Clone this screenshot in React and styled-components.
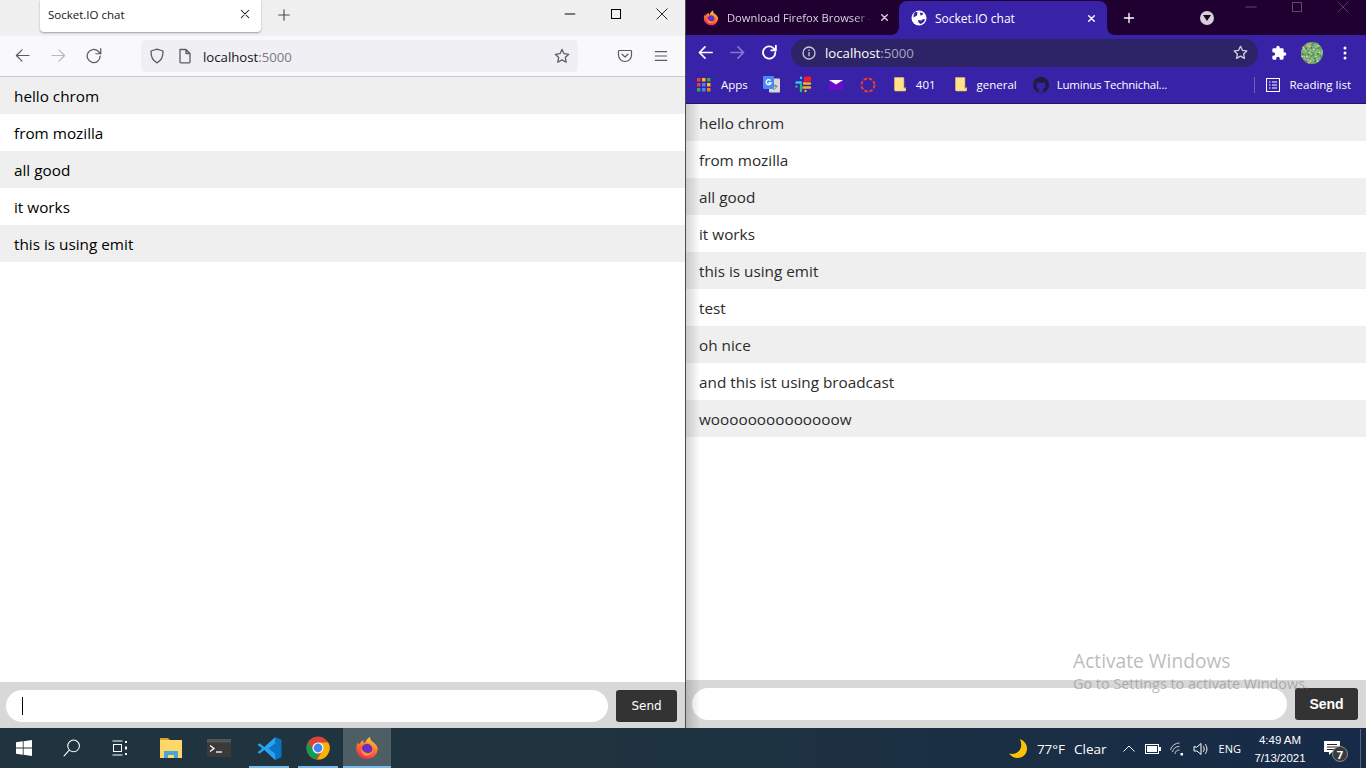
import styled, { createGlobalStyle } from "styled-components";

const GlobalStyle = createGlobalStyle`
  html, body {
    margin: 0;
    padding: 0;
    width: 1366px;
    height: 768px;
    overflow: hidden;
    background: #fff;
    font-family: "Open Sans", "Noto Sans", sans-serif;
  }
  * { box-sizing: border-box; }
  svg { display: block; flex: none; }
`;

const Screen = styled.div`
  position: relative;
  width: 1366px;
  height: 768px;
  display: flex;
  flex-direction: column;
`;

const Windows = styled.div`
  height: 728px;
  display: flex;
`;

const FirefoxWindow = styled.div`
  width: 686px;
  display: flex;
  flex-direction: column;
  border-right: 1px solid #4a4a50;
`;

const ChromeWindow = styled.div`
  position: relative;
  width: 680px;
  display: flex;
  flex-direction: column;

  &::after {
    content: "";
    position: absolute;
    left: 0;
    top: 104px;
    bottom: 0;
    width: 14px;
    background: linear-gradient(90deg, rgba(0, 0, 0, 0.16), rgba(0, 0, 0, 0));
    pointer-events: none;
  }
`;

/* firefox chrome */
const FxTabStrip = styled.div`
  height: 36px;
  flex: none;
  display: flex;
  align-items: flex-start;
  padding-left: 40px;
  background: #f0f0f0;
`;

const FxTab = styled.div`
  width: 221px;
  height: 32px;
  display: flex;
  align-items: center;
  justify-content: space-between;
  padding: 0 10px 4px 8px;
  background: #fff;
  border-radius: 0 0 4px 4px;
  box-shadow: 0 1px 2px rgba(0, 0, 0, 0.35);
  font-size: 11.5px;
  color: #15141a;
`;

const FxNewTab = styled.div`
  width: 46px;
  height: 30px;
  display: flex;
  align-items: center;
  justify-content: center;
`;

const WindowControls = styled.div`
  margin-left: auto;
  display: flex;
`;

const WindowButton = styled.div`
  width: 46px;
  height: ${(p) => p.$height || 28}px;
  display: flex;
  align-items: center;
  justify-content: center;
`;

const FxToolbar = styled.div`
  height: 41px;
  flex: none;
  display: flex;
  align-items: center;
  padding: 0 6px 1px 4px;
  background: #f9f9fb;
  border-bottom: 1px solid #cccccc;
`;

const ToolButton = styled.div`
  width: ${(p) => p.$size || 36}px;
  height: 32px;
  flex: none;
  display: flex;
  align-items: center;
  justify-content: center;
`;

const FxUrlBar = styled.div`
  width: 437px;
  height: 32px;
  margin: 0 29px;
  padding: 0 8px;
  display: flex;
  align-items: center;
  background: #f0f0f4;
  border-radius: 4px;
`;

const FxPageIcon = styled.div`
  margin-left: 12px;
`;

const FxUrlText = styled.div`
  margin-left: 10px;
  padding-top: 2px;
  font-size: 13.2px;
  color: #15141a;

  span {
    color: #7a7a80;
  }
`;

const PushRight = styled.div`
  margin-left: auto;
  display: flex;
  align-items: center;
`;

/* chrome chrome */
const CrTabStrip = styled.div`
  height: 35px;
  flex: none;
  display: flex;
  background: linear-gradient(#1f0030 50%, #3722a8 50%);
`;

const CrTabsLeft = styled.div`
  width: 213px;
  display: flex;
  align-items: center;
  padding: 0 0 0 17px;
  background: #1f0030;
  border-bottom-right-radius: 8px;
`;

const CrTabTitle = styled.div`
  width: 145px;
  margin-left: 8px;
  font-size: 11.2px;
  white-space: nowrap;
  color: #d9d4e0;
  -webkit-mask-image: linear-gradient(90deg, #000 88%, transparent);
  mask-image: linear-gradient(90deg, #000 88%, transparent);
`;

const CrActiveTab = styled.div`
  width: 208px;
  margin-top: 1px;
  display: flex;
  align-items: center;
  padding: 0 11px 0 12px;
  background: #3722a8;
  border-radius: 8px 8px 0 0;
  font-size: 12px;
  color: #fff;
`;

const CrActiveTitle = styled.div`
  margin-left: 8px;
  margin-right: auto;
`;

const CrTabsRight = styled.div`
  flex: 1;
  position: relative;
  display: flex;
  align-items: center;
  padding-left: 10px;
  background: #1f0030;
  border-bottom-left-radius: 8px;
`;

const CrNewTab = styled.div`
  width: 24px;
  display: flex;
  justify-content: center;
`;

const CrSearchTabs = styled.div`
  width: 14px;
  height: 14px;
  margin-left: 59px;
  display: flex;
  align-items: center;
  justify-content: center;
  border-radius: 50%;
  background: #d5cfd8;
`;

const CrControls = styled.div`
  position: absolute;
  top: -8px;
  right: 0;
  display: flex;
`;

const CrToolbar = styled.div`
  height: 35px;
  flex: none;
  display: flex;
  align-items: center;
  padding-left: 3px;
  background: #3722a8;
`;

const CrOmnibox = styled.div`
  width: 467px;
  height: 28px;
  margin: 0 5px 0 6px;
  padding: 0 10px 0 11px;
  display: flex;
  align-items: center;
  border-radius: 14px;
  background: #2c2466;
`;

const CrUrlText = styled.div`
  margin-left: 9px;
  font-size: 13.2px;
  color: #fff;

  span {
    color: #a9a5c0;
  }
`;

const Bookmarks = styled.div`
  height: 34px;
  flex: none;
  display: flex;
  align-items: center;
  padding: 0 0 4px 11px;
  background: #3722a8;
  border-bottom: 1px solid #1e1a62;
  font-size: 11.5px;
  color: #fff;
`;

const Bookmark = styled.div`
  display: flex;
  align-items: center;
  gap: ${(p) => p.$gap ?? 8}px;
  margin-right: ${(p) => p.$right ?? 0}px;
  letter-spacing: ${(p) => p.$spacing ?? 0}px;
`;

const BookmarkSeparator = styled.div`
  width: 1px;
  height: 16px;
  margin-left: auto;
  background: #6e62bd;
`;

const ReadingList = styled(Bookmark)`
  margin: 0 15px 0 11px;
`;

/* the chat page itself */
const MessageList = styled.ul`
  flex: 1;
  margin: 0;
  padding: 0;
  list-style: none;
  background: #fff;
`;

const Message = styled.li`
  height: 37px;
  padding-left: ${(p) => p.$inset}px;
  display: flex;
  align-items: center;
  font-size: 15.3px;
  color: ${(p) => p.$color};

  &:nth-child(odd) {
    background: #efefef;
  }
`;

const ChatForm = styled.form`
  height: ${(p) => p.$height}px;
  flex: none;
  display: flex;
  gap: 8px;
  padding: 8px ${(p) => p.$right}px 0 6px;
  background: #d8d8d8;
`;

const ChatInput = styled.div`
  flex: 1;
  height: 32px;
  display: flex;
  align-items: center;
  padding-left: 16px;
  border-radius: 16px;
  background: #fff;
`;

const Caret = styled.div`
  width: 1px;
  height: 18px;
  background: #000;
`;

const SendButton = styled.div`
  width: ${(p) => p.$width}px;
  height: 32px;
  display: flex;
  align-items: center;
  justify-content: center;
  border-radius: 3px;
  background: #333;
  color: #fff;
  font-family: ${(p) => (p.$bold ? '"Liberation Sans"' : '"DejaVu Sans"')}, sans-serif;
  font-weight: ${(p) => (p.$bold ? 700 : 400)};
  font-size: ${(p) => (p.$bold ? 14 : 12)}px;
`;

const Watermark = styled.div`
  position: absolute;
  left: 1073px;
  top: 648px;
  color: rgba(120, 120, 120, 0.5);
  font-size: 14.4px;
  line-height: 20px;
  white-space: nowrap;
  pointer-events: none;

  strong {
    display: block;
    font-size: 19.2px;
    line-height: 26px;
    font-weight: 400;
  }
`;

/* taskbar */
const Taskbar = styled.div`
  height: 40px;
  flex: none;
  display: flex;
  align-items: center;
  background: linear-gradient(90deg, #1f343e 0%, #1f343e 40%, #172a48 100%);
  color: #fff;
  font-size: 12px;
`;

const TaskTile = styled.div`
  position: relative;
  width: 48px;
  height: 40px;
  margin-left: ${(p) => p.$gap || 0}px;
  display: flex;
  align-items: center;
  justify-content: center;
  background: ${(p) => (p.$active ? "#4d5e65" : "transparent")};

  &::after {
    content: "";
    display: ${(p) => (p.$running ? "block" : "none")};
    position: absolute;
    left: ${(p) => (p.$active ? 0 : 4)}px;
    right: ${(p) => (p.$active ? 0 : 4)}px;
    bottom: 0;
    height: 2px;
    background: #76b9ed;
  }
`;

const Tray = styled.div`
  margin-left: auto;
  padding-top: 1px;
  display: flex;
  align-items: center;
`;

const Weather = styled.div`
  display: flex;
  align-items: center;
  gap: 9px;
  font-size: 13.5px;
  margin-right: 10px;
`;

const TrayIcon = styled.div`
  width: 24px;
  display: flex;
  justify-content: center;
`;

const Language = styled.div`
  margin: 0 6px;
  font-size: 11px;
`;

const Clock = styled.div`
  width: 66px;
  font-family: "Liberation Sans", sans-serif;
  font-size: 11.5px;
  line-height: 18px;
  text-align: center;
`;

const Notifications = styled.div`
  position: relative;
  width: 38px;
  display: flex;
  justify-content: center;
`;

const NotificationCount = styled.div`
  position: absolute;
  top: 5px;
  left: 19px;
  width: 16px;
  height: 16px;
  display: flex;
  align-items: center;
  justify-content: center;
  border-radius: 50%;
  border: 1px solid #8a8a8a;
  background: #3a3a3a;
  font-size: 11px;
  font-weight: 700;
`;

const ShowDesktop = styled.div`
  width: 1px;
  height: 40px;
  margin: 0 5px 0 9px;
  background: #56657a;
`;

/* drawings */
const Line = ({ size = 16, color, width = 1.3, d, view = 16 }) => (
  <svg width={size} height={size} viewBox={`0 0 ${view} ${view}`} fill="none" stroke={color} strokeWidth={width} strokeLinecap="round" strokeLinejoin="round">
    <path d={d} />
  </svg>
);

const ARROW_BACK = "M15 8H1.5M7.5 2 1.5 8l6 6";
const ARROW_FORWARD = "M1 8h13.5M8.5 2l6 6-6 6";
const RELOAD = "M13.5 8a5.8 5.8 0 1 1-1.8-4.2L14 6M14 1.5V6H9.6";
const STAR = "M8 1.4l2 4.3 4.7.6-3.4 3.2.9 4.7L8 11.9l-4.2 2.3.9-4.7L1.3 6.3 6 5.7z";
const SHIELD = "M8 1.2 14 3c.2 6-1.6 9.6-6 11.8C3.600 12.600 1.800 9 2 3z";
const PAGE = "M3 1.500h6l4 4V14a.8.8 0 0 1-.8.8H3.800A.8.8 0 0 1 3 14zM9 1.500v4h4";
const CLOSE = "M3 3l10 10M13 3 3 13";
const PLUS = "M8 2v12M2 8h12";

const FirefoxLogo = ({ size = 16 }) => (
  <svg width={size} height={size} viewBox="0 0 24 24">
    <defs>
      <linearGradient id={`fx${size}`} x1="0.7" y1="0" x2="0.3" y2="1">
        <stop offset="0" stopColor="#ffd43a" />
        <stop offset="0.45" stopColor="#ff7a2a" />
        <stop offset="1" stopColor="#f0245c" />
      </linearGradient>
    </defs>
    <path fill={`url(#fx${size})`} d="M12 23A10.800 10.800 0 0 1 1.200 11.600C1.400 9 2.200 7.500 3.300 6.200c0 1.200.5 2 1 2.400C5 6.300 6.800 4.900 8.600 4.300 8.200 6 9 6.800 10 7.200 10.500 4.500 12.600 2.400 15.200.8c-.3 2 .3 3.300 1.800 4.500 3.500 2.500 5.800 5 5.800 7.900A10.800 10.800 0 0 1 12 23z" />
    <circle cx="12" cy="13" r="5.300" fill="#6a2fc0" />
    <path fill="#ff9a2a" d="M6.500 12c1 4 5 6 8.500 4.800 1.500-.5 3-2 3-4 .5 4-3 7-6.500 7S5.500 16 6.500 12z" />
  </svg>
);

const ChromeLogo = () => (
  <svg width="24" height="24" viewBox="0 0 24 24">
    <circle cx="12" cy="12" r="11.500" fill="#db4437" />
    <path fill="#0f9d58" d="M12 23.500A11.500 11.500 0 0 1 2 6.300L7.600 15l5 2.600-2.300 5.800z" />
    <path fill="#f4b400" d="M12 6.500h10.300A11.500 11.500 0 0 1 11 23.500l5.800-9z" />
    <circle cx="12" cy="12" r="5.600" fill="#fff" />
    <circle cx="12" cy="12" r="4.400" fill="#4285f4" />
  </svg>
);

const Globe = () => (
  <svg width="16" height="16" viewBox="0 0 16 16">
    <circle cx="8" cy="8" r="7.500" fill="#fff" />
    <path fill="#3722a8" d="M2.500 7.500 6 5.500l.5-3-2-1C3 3 2.300 5 2.500 7.500zM7 10l3.500.5L12 9l2 .5c-.5 2-2 4-4.500 4.500L7.500 12.500zM9 2.500l3 .5-.5 2-2 .5z" />
  </svg>
);

const Note = () => (
  <svg width="12" height="15" viewBox="0 0 12 15">
    <path fill="#ffe28a" stroke="#e0c060" strokeWidth="0.6" d="M.5.500h8.800a.6.6 0 0 1 .6.6v10.400l2-1v2.500a1 1 0 0 1-1 1H1.500a1 1 0 0 1-1-1z" />
  </svg>
);

const AppsGrid = () => {
  const colors = ["#ea4335", "#fbbc04", "#34a853", "#ea4335", "#4285f4", "#fbbc04", "#34a853", "#4285f4", "#ea8600"];
  return (
    <svg width="14" height="14" viewBox="0 0 14 14">
      {colors.map((fill, i) => (
        <rect key={i} x={(i % 3) * 5} y={Math.floor(i / 3) * 5} width="3.500" height="3.500" fill={fill} />
      ))}
    </svg>
  );
};

const TranslateIcon = () => (
  <svg width="17" height="17" viewBox="0 0 17 17">
    <rect x="6" y="2.500" width="11" height="14" rx="1" fill="#d8d8d8" />
    <rect x="0" y="0" width="11" height="13" rx="1" fill="#4a8af4" />
    <path fill="none" stroke="#fff" strokeWidth="1.300" d="M7.500 4.500A2.500 2.500 0 1 0 8 7H5.500" />
    <path fill="none" stroke="#777" d="M12 8.500v1.500M10.500 10h4M13.500 10c-.3 2-1.500 3-3 3.500" />
  </svg>
);

const SlackIcon = () => (
  <svg width="17" height="17" viewBox="0 0 17 17" strokeWidth="2.400" strokeLinecap="round" fill="none">
    <path stroke="#36c5f0" d="M1.500 6.500H6M6 1.800v.2" />
    <path stroke="#2eb67d" d="M6 9v6M1.500 10.500v.1" />
    <path stroke="#ecb22e" d="M8.500 11.500H15M10.500 15v.1" />
    <path stroke="#e01e5a" d="M10 2v6" />
    <circle cx="13.500" cy="3" r="2.800" fill="#ff1a1a" stroke="none" />
    <path stroke="#ecb22e" d="M9 7.500h6" />
  </svg>
);

const MailIcon = () => (
  <svg width="14" height="10" viewBox="0 0 14 10">
    <rect width="14" height="10" fill="#6a0dc8" />
    <path fill="#fff" d="M0 0h14L7 4.500z" />
  </svg>
);

const RingIcon = () => (
  <svg width="16" height="16" viewBox="0 0 16 16">
    <circle cx="8" cy="8" r="6.500" fill="none" stroke="#e8402a" strokeWidth="2" strokeDasharray="3.500 1.600" />
  </svg>
);

const GithubIcon = () => (
  <svg width="16" height="16" viewBox="0 0 16 16">
    <circle cx="8" cy="8" r="8" fill="#1b1f3a" />
    <path fill="#3722a8" d="M6 15.500v-2c-2 .4-2.600-.8-2.800-1.400.9.300 1.500 1 2.600.9.100-.5.300-.8.500-1-1.800-.3-3-1.200-3-3.200 0-.8.300-1.400.7-1.900-.1-.4-.2-1.100.1-1.900 1 0 1.700.6 2 .9a7 7 0 0 1 3.800 0c.3-.3 1-.9 2-.9.300.8.200 1.500.1 1.900.4.500.7 1.100.7 1.900 0 2-1.200 2.900-3 3.200.3.300.5.700.5 1.300v2.200H6z" />
  </svg>
);

const ReadingIcon = () => (
  <svg width="14" height="14" viewBox="0 0 14 14" fill="none" stroke="#fff">
    <rect x="0.500" y="0.500" width="13" height="13" />
    <path d="M3 4h1.500M6 4h5M3 7h1.500M6 7h5M3 10h1.500M6 10h5" />
  </svg>
);

const PuzzleIcon = () => (
  <svg width="16" height="16" viewBox="0 0 24 24">
    <path fill="#fff" d="M20.500 11H19V7a2 2 0 0 0-2-2h-4V3.500a2.500 2.500 0 0 0-5 0V5H4a2 2 0 0 0-2 2v3.800h1.500a2.700 2.700 0 0 1 0 5.400H2V20a2 2 0 0 0 2 2h3.800v-1.500a2.700 2.700 0 0 1 5.400 0V22H17a2 2 0 0 0 2-2v-4h1.500a2.500 2.500 0 0 0 0-5z" />
  </svg>
);

// mottled profile picture, dots come from a fixed sequence so it stays the same every render
const Avatar = () => {
  const dotColors = ["#5f9a4c", "#a9d08e", "#7fc3b8", "#3f7f45", "#d6e6a0", "#6fa8c9"];
  const dots = Array.from({ length: 70 }, (_, i) => ({
    x: 11 + Math.cos(i * 2.4) * Math.sqrt(i) * 1.3,
    y: 11 + Math.sin(i * 2.4) * Math.sqrt(i) * 1.3,
    fill: dotColors[(i * 7) % dotColors.length],
  }));
  return (
    <svg width="22" height="22" viewBox="0 0 22 22">
      <circle cx="11" cy="11" r="11" fill="#79a862" />
      {dots.map((dot, i) => (
        <circle key={i} cx={dot.x} cy={dot.y} r="0.900" fill={dot.fill} />
      ))}
      <circle cx="6.500" cy="3.500" r="1.500" fill="#ee8fb0" />
      <circle cx="7.500" cy="18" r="1.500" fill="#ee8fb0" />
    </svg>
  );
};

const KebabIcon = () => (
  <svg width="4" height="14" viewBox="0 0 4 14" fill="#fff">
    <circle cx="2" cy="2" r="1.500" />
    <circle cx="2" cy="7" r="1.500" />
    <circle cx="2" cy="12" r="1.500" />
  </svg>
);

const InfoIcon = () => (
  <svg width="14" height="14" viewBox="0 0 14 14" fill="none" stroke="#c9c6d8" strokeWidth="1.300">
    <circle cx="7" cy="7" r="6" />
    <path d="M7 6v4.200M7 3.600v1.300" />
  </svg>
);

const PocketIcon = () => (
  <svg width="16" height="16" viewBox="0 0 16 16" fill="none" stroke="#5b5b66" strokeWidth="1.200" strokeLinejoin="round" strokeLinecap="round">
    <path d="M2.300 2.500h11.400c.5 0 .8.300.8.800V7a6.500 6.500 0 0 1-13 0V3.300c0-.5.300-.8.800-.8z" />
    <path d="M5 6.200l3 2.800 3-2.800" />
  </svg>
);

const WindowsLogo = () => (
  <svg width="16" height="16" viewBox="0 0 16 16" fill="#fff">
    <path d="M0 2.300 6.800 1.300v6.300H0zM7.600 1.200 16 0v7.600H7.600zM0 8.400h6.800v6.300L0 13.700zM7.600 8.400H16V16l-8.400-1.200z" />
  </svg>
);

const TaskView = () => (
  <svg width="16" height="16" viewBox="0 0 16 16" fill="none" stroke="#fff">
    <path d="M0.500 1h10M0.500 15h10" />
    <rect x="1.500" y="4.500" width="8" height="7" />
    <path d="M14 1v2M14 6.500v3M14 13v2" strokeWidth="2" />
  </svg>
);

const ExplorerIcon = () => (
  <svg width="22" height="20" viewBox="0 0 22 20">
    <path fill="#d9a22a" d="M0 0h8l2 2H0z" />
    <rect y="2" width="22" height="18" fill="#ffd768" />
    <path fill="#4aa3dc" d="M4 20v-7h14v7h-4v-3H8v3z" />
  </svg>
);

const TerminalIcon = () => (
  <svg width="24" height="18" viewBox="0 0 24 18">
    <rect width="24" height="18" fill="#3a3a3a" />
    <rect width="24" height="3.500" fill="#555" />
    <path fill="none" stroke="#fff" strokeWidth="1.300" d="M3 6.500l4 3-4 3" />
    <path stroke="#fff" strokeWidth="1.300" d="M9 13h6" />
  </svg>
);

const VsCodeIcon = () => (
  <svg width="25" height="25" viewBox="0 0 24 24">
    <path fill="#0a74c4" d="M17.500 1 23.500 3.500v17L17.500 23 7 13l10.500-6.500z" />
    <path fill="#2aa3ee" d="M17.500 1 7 10.500 2.500 7 .5 8.500 5 12 .5 15.500l2 1.500L7 13.500 17.500 23V17L11 12l6.500-5z" />
  </svg>
);

const Moon = () => (
  <svg width="19" height="19" viewBox="0 0 19 19">
    <path fill="#ffc107" d="M11 0c4 1.500 7 5 7 9.500 0 5.500-4 9.500-9.500 9.500C5 19 2 17 0 14.500c6 1.500 11-1.500 12-6.500.5-3 0-5.500-1-8z" />
  </svg>
);

const Wifi = () => (
  <svg width="14" height="14" viewBox="0 0 14 14" fill="none" stroke="#c8ccd2" strokeWidth="1">
    <path d="M.5 8A9 9 0 0 1 9.500 1M2.500 10a7 7 0 0 1 7-5.500M5 12a4.500 4.500 0 0 1 4.500-4" />
    <rect x="10.500" y="11" width="2.500" height="2.500" fill="#fff" stroke="none" />
  </svg>
);

const messages = ["hello chrom", "from mozilla", "all good", "it works", "this is using emit"];
const moreMessages = [...messages, "test", "oh nice", "and this ist using broadcast", "woooooooooooooow"];

const App = () => {
  return (
    <Screen>
      <GlobalStyle />
      <Windows>
        <FirefoxWindow>
          <FxTabStrip>
            <FxTab>
              Socket.IO chat
              <Line size={12} color="#15141a" d={CLOSE} width={1.4} />
            </FxTab>
            <FxNewTab>
              <Line size={14} color="#4a4a52" d={PLUS} />
            </FxNewTab>
            <WindowControls>
              <WindowButton>
                <Line size={12} color="#000" d="M1.500 8h13" />
              </WindowButton>
              <WindowButton>
                <svg width="10" height="10" viewBox="0 0 10 10" fill="none" stroke="#000">
                  <rect x="0.500" y="0.500" width="9" height="9" />
                </svg>
              </WindowButton>
              <WindowButton>
                <Line size={12} color="#000" d="M1 1l14 14M15 1 1 15" width={1.1} />
              </WindowButton>
            </WindowControls>
          </FxTabStrip>
          <FxToolbar>
            <ToolButton>
              <Line size={15} color="#5b5b66" d={ARROW_BACK} />
            </ToolButton>
            <ToolButton>
              <Line size={15} color="#b8b8bf" d={ARROW_FORWARD} />
            </ToolButton>
            <ToolButton>
              <Line size={18} color="#5b5b66" d={RELOAD} width={1.1} />
            </ToolButton>
            <FxUrlBar>
              <Line size={16} color="#5b5b66" d={SHIELD} />
              <FxPageIcon>
                <Line size={16} color="#5b5b66" d={PAGE} />
              </FxPageIcon>
              <FxUrlText>
                localhost<span>:5000</span>
              </FxUrlText>
              <PushRight>
                <Line size={16} color="#5b5b66" d={STAR} />
              </PushRight>
            </FxUrlBar>
            <ToolButton $size={36}>
              <PocketIcon />
            </ToolButton>
            <ToolButton $size={36}>
              <Line size={14} color="#5b5b66" d="M1.500 3h13M1.500 8h13M1.500 13h13" />
            </ToolButton>
          </FxToolbar>
          <MessageList>
            {messages.map((text) => (
              <Message key={text} $inset={14} $color="#000">
                {text}
              </Message>
            ))}
          </MessageList>
          <ChatForm $height={46} $right={8}>
            <ChatInput>
              <Caret />
            </ChatInput>
            <SendButton $width={61}>Send</SendButton>
          </ChatForm>
        </FirefoxWindow>

        <ChromeWindow>
          <CrTabStrip>
            <CrTabsLeft>
              <FirefoxLogo size={16} />
              <CrTabTitle>Download Firefox Browser -</CrTabTitle>
              <ToolButton $size={24}>
                <Line size={9} color="#d9d4e0" d={CLOSE} width={2.4} />
              </ToolButton>
            </CrTabsLeft>
            <CrActiveTab>
              <Globe />
              <CrActiveTitle>Socket.IO chat</CrActiveTitle>
              <Line size={9} color="#fff" d={CLOSE} width={2.4} />
            </CrActiveTab>
            <CrTabsRight>
              <CrNewTab>
                <Line size={12} color="#fff" d={PLUS} width={1.8} />
              </CrNewTab>
              <CrSearchTabs>
                <svg width="8" height="6" viewBox="0 0 8 6">
                  <path fill="#1f0030" d="M0 0h8L4 6z" />
                </svg>
              </CrSearchTabs>
              <CrControls>
                <WindowButton $height={30}>
                  <Line size={12} color="#5e4b6b" d="M1 8h14" />
                </WindowButton>
                <WindowButton $height={30}>
                  <svg width="10" height="10" viewBox="0 0 10 10" fill="none" stroke="#5e4b6b">
                    <rect x="0.500" y="0.500" width="9" height="9" />
                  </svg>
                </WindowButton>
                <WindowButton $height={30}>
                  <Line size={12} color="#5e4b6b" d="M1 1l14 14M15 1 1 15" width={1.1} />
                </WindowButton>
              </CrControls>
            </CrTabsRight>
          </CrTabStrip>
          <CrToolbar>
            <ToolButton $size={32}>
              <Line size={15} color="#fff" d={ARROW_BACK} width={1.8} />
            </ToolButton>
            <ToolButton $size={32}>
              <Line size={15} color="#8478cc" d={ARROW_FORWARD} width={1.8} />
            </ToolButton>
            <ToolButton $size={32}>
              <Line size={17} color="#fff" d={RELOAD} width={1.7} />
            </ToolButton>
            <CrOmnibox>
              <InfoIcon />
              <CrUrlText>
                localhost<span>:5000</span>
              </CrUrlText>
              <PushRight>
                <Line size={15} color="#d0cee0" d={STAR} width={1.4} />
              </PushRight>
            </CrOmnibox>
            <ToolButton $size={32}>
              <PuzzleIcon />
            </ToolButton>
            <ToolButton $size={34}>
              <Avatar />
            </ToolButton>
            <ToolButton $size={32}>
              <KebabIcon />
            </ToolButton>
          </CrToolbar>
          <Bookmarks>
            <Bookmark $gap={10} $right={15}>
              <AppsGrid />
              Apps
            </Bookmark>
            <Bookmark $right={15}>
              <TranslateIcon />
            </Bookmark>
            <Bookmark $right={17}>
              <SlackIcon />
            </Bookmark>
            <Bookmark $right={17}>
              <MailIcon />
            </Bookmark>
            <Bookmark $right={18}>
              <RingIcon />
            </Bookmark>
            <Bookmark $gap={10} $right={19}>
              <Note />
              401
            </Bookmark>
            <Bookmark $gap={10} $right={16}>
              <Note />
              general
            </Bookmark>
            <Bookmark $spacing={-0.25}>
              <GithubIcon />
              Luminus Technichal...
            </Bookmark>
            <BookmarkSeparator />
            <ReadingList $gap={9}>
              <ReadingIcon />
              Reading list
            </ReadingList>
          </Bookmarks>
          <MessageList>
            {moreMessages.map((text) => (
              <Message key={text} $inset={13} $color="#2b2b2b">
                {text}
              </Message>
            ))}
          </MessageList>
          <ChatForm $height={48} $right={8}>
            <ChatInput />
            <SendButton $width={63} $bold>
              Send
            </SendButton>
          </ChatForm>
        </ChromeWindow>
      </Windows>

      <Taskbar>
        <TaskTile>
          <WindowsLogo />
        </TaskTile>
        <TaskTile>
          <Line size={18} color="#fff" width={1} d="M15.500 6.500a5.500 5.500 0 1 1-11 0 5.500 5.500 0 0 1 11 0zM6 10.500l-5 5.500" view={17} />
        </TaskTile>
        <TaskTile>
          <TaskView />
        </TaskTile>
        <TaskTile $gap={3}>
          <ExplorerIcon />
        </TaskTile>
        <TaskTile>
          <TerminalIcon />
        </TaskTile>
        <TaskTile $gap={2} $running>
          <VsCodeIcon />
        </TaskTile>
        <TaskTile $gap={1} $running>
          <ChromeLogo />
        </TaskTile>
        <TaskTile $gap={1} $running $active>
          <FirefoxLogo size={24} />
        </TaskTile>
        <Tray>
          <Weather>
            <Moon />
            <span>77°F</span>
            <span>Clear</span>
          </Weather>
          <TrayIcon>
            <Line size={12} color="#fff" d="M1 11l7-7 7 7" />
          </TrayIcon>
          <TrayIcon>
            <svg width="16" height="10" viewBox="0 0 16 10">
              <rect x="0.500" y="0.500" width="13" height="9" fill="none" stroke="#fff" />
              <rect x="2" y="2" width="10" height="6" fill="#fff" />
              <rect x="14" y="3" width="2" height="4" fill="#fff" />
            </svg>
          </TrayIcon>
          <TrayIcon>
            <Wifi />
          </TrayIcon>
          <TrayIcon>
            <Line size={16} color="#fff" width={1} d="M1 6v4h3l4 3.500V2.500L4 6zM10.500 5.500c1 1.500 1 3.500 0 5M12.500 3.500c2 3 2 6 0 9" />
          </TrayIcon>
          <Language>ENG</Language>
          <Clock>
            4:49 AM
            <br />
            7/13/2021
          </Clock>
          <Notifications>
            <svg width="16" height="15" viewBox="0 0 16 15">
              <path fill="#fff" d="M0 0h16v11H8l-3 3v-3H0z" />
              <path stroke="#223" d="M3 3.500h10M3 6h10M3 8.500h7" />
            </svg>
            <NotificationCount>7</NotificationCount>
          </Notifications>
          <ShowDesktop />
        </Tray>
      </Taskbar>

      <Watermark>
        <strong>Activate Windows</strong>
        Go to Settings to activate Windows.
      </Watermark>
    </Screen>
  );
};

export default App;
